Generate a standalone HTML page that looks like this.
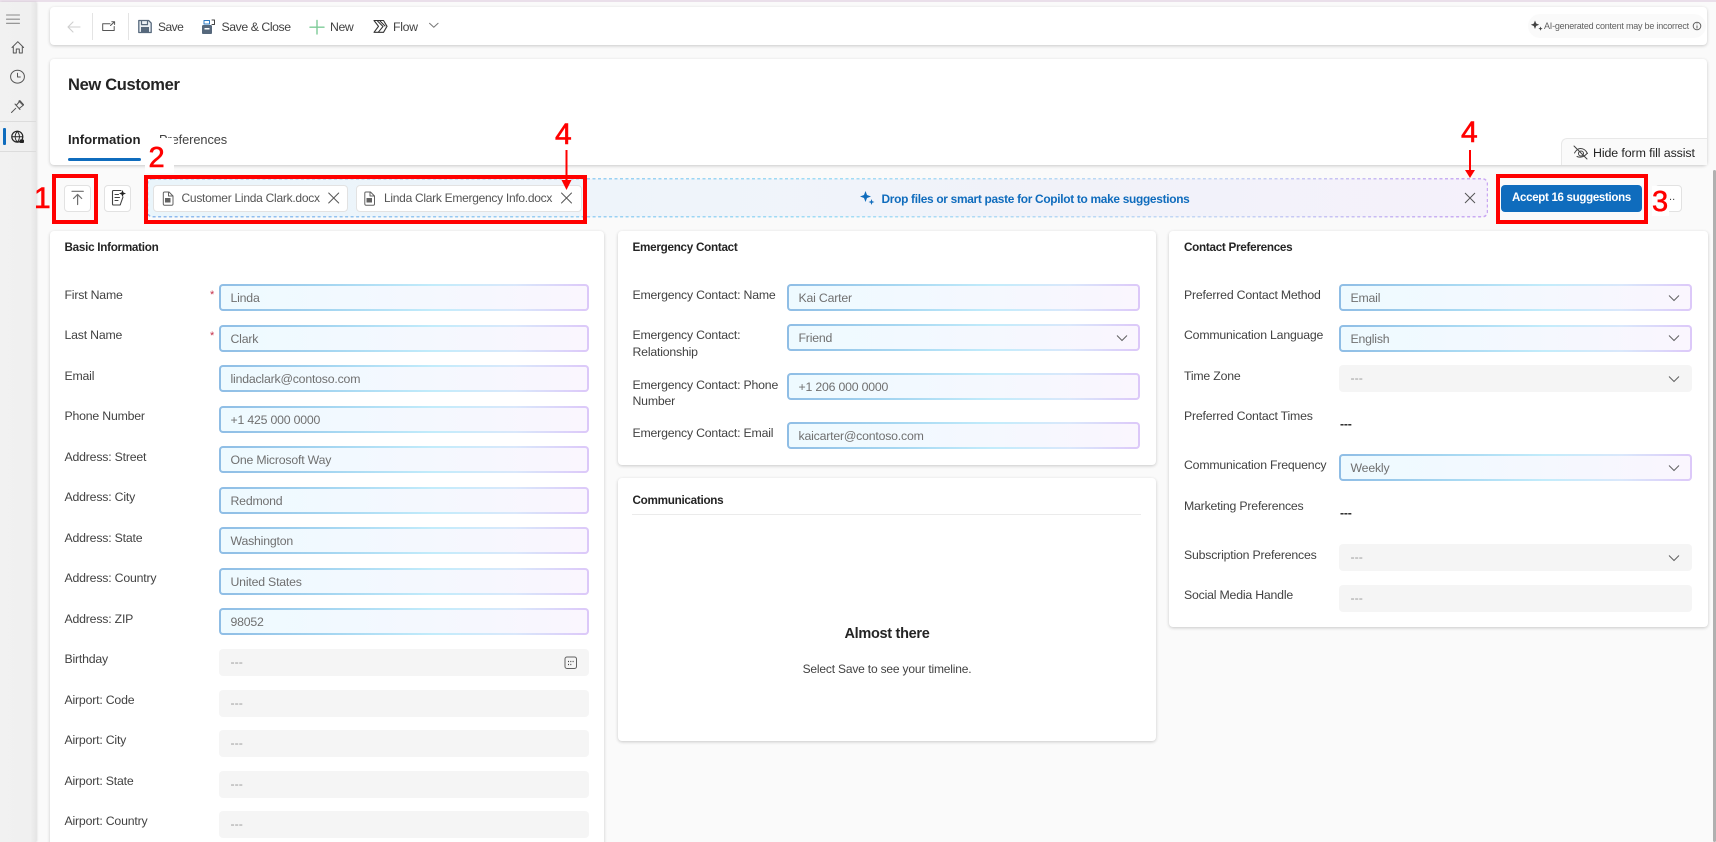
<!DOCTYPE html>
<html><head><meta charset="utf-8"><title>New Customer</title>
<style>
html,body{margin:0;padding:0;width:1716px;height:842px;overflow:hidden;background:#fafafa;font-family:"Liberation Sans",sans-serif;color:#242424}
#w{position:relative;width:1716px;height:842px;overflow:hidden;background:#fafafa}
.a{position:absolute}
.card{position:absolute;background:#fff;border-radius:4px;box-shadow:0 1px 3px rgba(0,0,0,.2)}
.t{position:absolute;white-space:nowrap;font-size:12.3px;line-height:17px;letter-spacing:-.2px;color:#424242}
.h{position:absolute;white-space:nowrap;font-size:11.7px;line-height:17px;font-weight:bold;color:#242424;letter-spacing:-.28px}
.i{position:absolute;height:27px;box-sizing:border-box;border-radius:4px;border:2px solid transparent;font-size:12.3px;line-height:25px;letter-spacing:-.2px;color:#707070;padding-left:9.5px;
background:linear-gradient(90deg,#eefaff 0%,#f2f9ff 35%,#f6f7fe 70%,#faf6fe 100%) padding-box,linear-gradient(90deg,#8fbde5 0%,#a5d6f1 30%,#c2ecfb 58%,#dae8fb 80%,#dcc8f9 100%) border-box}
.d{position:absolute;height:27px;box-sizing:border-box;border-radius:4px;background:#f5f5f5;font-size:12.3px;line-height:27px;color:#9a9a9a;padding-left:11.5px}
.i1{left:219px;width:370px}.i2{left:787px;width:353px}.i3{left:1339px;width:353px}
.sv{position:absolute;overflow:visible;fill:none;stroke:#424242;stroke-width:1}
.b{position:absolute;height:27px;top:185px;box-sizing:border-box;background:#fff;border:1px solid #e2e2e2;border-radius:4px}
.red{position:absolute;color:#f00;font-size:29px;line-height:30px;-webkit-text-stroke:.6px #f00}
.rb{position:absolute;box-sizing:border-box;border:4px solid #f00}
</style></head><body><div id="w">
<div class="a" style="left:0;top:0;width:1716px;height:2px;background:#eadfea"></div>
<!-- sidebar -->
<div class="a" style="left:0;top:2px;width:36px;height:840px;background:linear-gradient(90deg,#f1f1f1 0%,#f0f0f0 85%,#e6e6e6 100%);box-shadow:1px 0 2px rgba(0,0,0,.12)"></div>
<div class="a" style="left:0;top:121px;width:36px;height:1px;background:#dcdcdc"></div>
<div class="a" style="left:0;top:151px;width:36px;height:1px;background:#dcdcdc"></div>
<div class="a" style="left:3px;top:128px;width:2.5px;height:17px;background:#0f6cbd;border-radius:1px"></div>
<svg class="sv" style="left:0;top:0" width="36" height="160" viewBox="0 0 36 160" stroke-linecap="round" stroke-linejoin="round">
<path d="M6.500 15h13M6.500 19.200h13M6.500 23.300h13" stroke="#8a8a8a" stroke-width="1.100"/>
<path d="M12 47.500l5.800-5.800 5.800 5.800M13.300 46.500v6.500h3v-4h3v4h3v-6.500" stroke="#555"/>
<ellipse cx="17.500" cy="76.700" rx="6.900" ry="6.400" stroke="#555"/><path d="M17.500 73.200v3.800h2.800" stroke="#555"/>
<path d="M11.500 112.500l4.200-4.200M15 104l5 5.500M16.500 105l3.500-4 3.500 4-4 3.300" stroke="#555"/><path d="M18.500 101l1.500-.8 3.800 4.300-.8 1z" fill="#555" stroke="#555" stroke-width=".5"/>
<circle cx="17.300" cy="136.700" r="5.500" stroke="#242424" stroke-width="1.200"/><path d="M12 136.700h10.500M17.300 131.300c-2.800 3.500-2.800 7.500 0 10.800M17.300 131.300c2.800 3.500 2.800 7.500 0 10.800" stroke="#242424"/><rect x="19.500" y="139.500" width="4.500" height="3.500" rx="1" fill="#242424" stroke="none"/>
</svg>
<!-- toolbar -->
<div class="card" style="left:50px;top:7px;width:1657px;height:38px"></div>
<div class="a" style="left:92px;top:13px;width:1px;height:27px;background:#e4e4e4"></div>
<div class="a" style="left:128px;top:13px;width:1px;height:27px;background:#e4e4e4"></div>
<svg class="sv" style="left:0;top:0" width="460" height="50" viewBox="0 0 460 50" stroke-linecap="round" stroke-linejoin="round">
<path d="M68 27h12M68 27l5-5M68 27l5 5" stroke="#cfcfcf" stroke-width="1.100"/>
<path d="M110 23.800h-7.300v6.700h11.500v-4" stroke="#555"/><path d="M110.500 25.500l3.800-3.500M111.800 21.800h2.800v2.700" stroke="#555"/>
<path d="M138.800 20.500h9.800l2.600 2.600v9.400h-12.400z" stroke="#56687c" stroke-width="1.300" fill="#eaf0f5"/><path d="M141.500 20.800v3.800h6v-3.800" stroke="#56687c" stroke-width="1.200"/><rect x="141" y="27" width="8" height="5.500" fill="#56687c" stroke="none"/>
<rect x="202.500" y="25.500" width="9" height="8" rx=".8" fill="#56687c" stroke="#56687c"/><rect x="204.500" y="28" width="5" height="1.500" fill="#fff" stroke="none"/>
<path d="M204 20.500h5.500v3.500H204z" stroke="#2f7cc4" stroke-width="1"/><path d="M212 20h2.500v4.500H212" stroke="#424242" stroke-width="1"/>
<path d="M317 20.500v13.500M310 27.200h14" stroke="#7dcb97" stroke-width="1.400"/>
<path d="M374 20.500h9.500l3.500 5.800-3.500 6h-9.500l4.500-6z" stroke="#333" stroke-width="1.100"/><path d="M377.500 21l5.500 5.500-4.500 5.500M380 21l5 5" stroke="#333" stroke-width="1"/>
<path d="M429.500 23.300l4.300 4 4.300-4" stroke="#777"/>
</svg>
<div class="t" style="left:158px;top:18.500px;font-size:12px;letter-spacing:-.5px;color:#424242">Save</div>
<div class="t" style="left:221.500px;top:18.500px;letter-spacing:-.45px">Save &amp; Close</div>
<div class="t" style="left:330px;top:18.500px;letter-spacing:-.4px">New</div>
<div class="t" style="left:393px;top:18.500px;letter-spacing:-.3px">Flow</div>
<div class="a" style="left:1528px;top:14px;width:178px;height:24px;border-radius:12px;background:#fafafa"></div>
<svg class="sv" style="left:1530px;top:16px" width="176" height="20" viewBox="0 0 176 20">
<path d="M4 5l1.200 3 3 1.200-3 1.200L4 13.500l-1.200-3-3-1.200 3-1.200zM9.500 11l.6 1.500 1.500.6-1.500.6-.6 1.500-.6-1.500-1.500-.6 1.500-.6z" fill="#424242" stroke="none" transform="translate(1 -.5)"/>
<circle cx="167" cy="10" r="3.800" stroke="#616161"/><path d="M167 9.500v3M167 7.500v.8" stroke="#616161"/>
</svg>
<div class="t" style="left:1544px;top:17.500px;font-size:9px;letter-spacing:-.22px;color:#616161">AI-generated content may be incorrect</div>
<!-- header -->
<div class="card" style="left:50px;top:59px;width:1657px;height:106px"></div>
<div class="t" style="left:68px;top:75px;font-size:16.500px;line-height:20px;font-weight:bold;letter-spacing:-.33px;color:#242424">New Customer</div>
<div class="t" style="left:68px;top:130.500px;font-size:13.200px;font-weight:bold;letter-spacing:0;color:#242424">Information</div>
<div class="a" style="left:68px;top:158px;width:73px;height:2.500px;background:#0f6cbd;border-radius:2px"></div>
<div class="t" style="left:159px;top:130.500px;font-size:12.800px;letter-spacing:-.08px;color:#424242">Preferences</div>
<div class="a" style="left:145px;top:138px;width:29px;height:35px;background:#fff"></div>
<div class="red" style="left:148.500px;top:143px;font-size:29px">2</div>
<div class="a" style="left:1561px;top:138px;width:146px;height:27px;box-sizing:border-box;background:#fafafa;border:1px solid #e8e8e8;border-bottom:0;border-right:0;border-radius:6px 0 0 0"></div>
<svg class="sv" style="left:1572px;top:144px" width="18" height="18" viewBox="0 0 18 18" stroke-linecap="round">
<path d="M2 2l13 13M2.500 9c2-3.500 4-4.500 6-4.500s5 1 7 5M5 12.500c2 1 6 1.500 10-3" stroke="#424242"/><circle cx="9" cy="9.500" r="2.500" stroke="#424242"/>
</svg>
<div class="t" style="left:1593px;top:144.500px;font-size:12.400px;letter-spacing:-.1px;color:#242424">Hide form fill assist</div>
<!-- action row -->
<div class="b" style="left:63.500px;width:27px"></div>
<div class="b" style="left:104px;width:27px"></div>
<svg class="sv" style="left:60px;top:172px" width="80" height="40" viewBox="0 0 80 40" stroke-linecap="round" stroke-linejoin="round">
<path d="M12 19.300h11.300M17.600 32.500V22.500M13.500 26.500l4.100-4.100 4.100 4.100" stroke="#6f6f6f" stroke-width="1.200"/>
<path d="M61 18.500h-7.500a1 1 0 0 0-1 1v12.500a1 1 0 0 0 1 1h6a1 1 0 0 0 1-1l2.500-7M55 22.500h3.500M55 25.500h4.500M55 28.500h3" stroke="#424242" stroke-width="1.100"/>
<path d="M62.500 18l1 2.500 2.500 1-2.500 1-1 2.500-1-2.500-2.500-1 2.500-1z" fill="#242424" stroke="none"/>
</svg>
<div class="a" style="left:147px;top:178.500px;width:1341px;height:38.500px;box-sizing:border-box;border-radius:5px;background:linear-gradient(90deg,#eaf5fb 0%,#eff4fa 40%,#f1f2f9 70%,#f5f1fb 100%)"></div>
<svg class="a" style="left:147px;top:178px" width="1341" height="40" viewBox="0 0 1341 40" fill="none">
<defs><linearGradient id="g" x1="0" x2="1" y1="0" y2="0"><stop offset="0" stop-color="#8db8ee"/><stop offset=".5" stop-color="#a0dcf5"/><stop offset=".8" stop-color="#c6d6f4"/><stop offset="1" stop-color="#c9a8f2"/></linearGradient></defs>
<rect x=".5" y=".8" width="1340" height="38" rx="5" stroke="url(#g)" stroke-width="1.500" stroke-dasharray="3 2.500"/>
</svg>
<div class="a" style="left:153px;top:185px;width:195px;height:27px;box-sizing:border-box;background:#fff;border:1px solid #e2e2e2;border-radius:4px"></div>
<div class="a" style="left:355.500px;top:185px;width:226px;height:27px;box-sizing:border-box;background:#fff;border:1px solid #e2e2e2;border-radius:4px"></div>
<svg class="sv" style="left:150px;top:185px" width="440" height="27" viewBox="0 0 440 27" stroke-linecap="round" stroke-linejoin="round">
<path d="M14.500 7h4.500l4 4v8a1.200 1.200 0 0 1-1.200 1.200h-7.300a1.200 1.200 0 0 1-1.200-1.200V8.200A1.200 1.200 0 0 1 14.500 7z" stroke="#616161"/><rect x="15" y="13" width="5.500" height="4.500" fill="#616161" stroke="none"/><path d="M18.500 7.500v3.500h4" stroke="#616161"/>
<path d="M216 7h4.500l4 4v8a1.200 1.200 0 0 1-1.200 1.200H216a1.200 1.200 0 0 1-1.200-1.200V8.200A1.200 1.200 0 0 1 216 7z" stroke="#616161"/><rect x="216.500" y="13" width="5.500" height="4.500" fill="#616161" stroke="none"/><path d="M220 7.500v3.500h4" stroke="#616161"/>
<path d="M178.700 8l10 10M188.700 8l-10 10" stroke="#555"/>
<path d="M411.500 8l10 10M421.500 8l-10 10" stroke="#555"/>
</svg>
<div class="t" style="left:181.500px;top:190px;font-size:12px;letter-spacing:-.26px;color:#555">Customer Linda Clark.docx</div>
<div class="t" style="left:384px;top:190px;font-size:12px;letter-spacing:-.28px;color:#555">Linda Clark Emergency Info.docx</div>
<svg class="a" style="left:860px;top:190px" width="16" height="16" viewBox="0 0 16 16"><path d="M5.500 1l1.500 4 4 1.500-4 1.500-1.500 4-1.500-4-4-1.500 4-1.500zM11.500 9l.8 2.200 2.200.8-2.200.8-.8 2.200-.8-2.200-2.200-.8 2.200-.8z" fill="#0f6cbd"/></svg>
<div class="t" style="left:881.500px;top:190.500px;font-weight:bold;font-size:11.900px;letter-spacing:-.3px;color:#0f6cbd">Drop files or smart paste for Copilot to make suggestions</div>
<svg class="sv" style="left:1460px;top:188px" width="20" height="20" viewBox="0 0 20 20"><path d="M5 5l10 10M15 5L5 15" stroke="#555"/></svg>
<div class="a" style="left:1501px;top:185px;width:141px;height:27px;background:#0f6cbd;border-radius:4px;color:#fff;font-size:11.500px;font-weight:bold;line-height:27px;text-align:center;letter-spacing:-.3px">Accept 16 suggestions</div>
<div class="b" style="left:1655px;width:27px"></div>
<div class="a" style="left:1666px;top:190px;color:#424242;font-size:11px;line-height:14px">...</div>
<!-- annotations -->
<div class="rb" style="left:52px;top:174px;width:46px;height:50px"></div>
<div class="rb" style="left:143.500px;top:175px;width:443.500px;height:49px"></div>
<div class="rb" style="left:1496px;top:174px;width:152px;height:50px"></div>
<div class="red" style="left:34px;top:184px;font-size:30px">1</div>
<div class="a" style="left:1652px;top:186px;width:17px;height:30px;background:#fff"></div>
<div class="red" style="left:1652px;top:187px;font-size:29px">3</div>
<div class="red" style="left:555px;top:120px;font-size:30px">4</div>
<div class="red" style="left:1461px;top:118px;font-size:30px">4</div>
<svg class="a" style="left:540px;top:145px" width="60" height="50" viewBox="0 0 60 50"><path d="M26.500 5v33" stroke="#f00" stroke-width="2"/><path d="M21.500 35h10l-5 10z" fill="#f00"/></svg>
<svg class="a" style="left:1445px;top:145px" width="50" height="35" viewBox="0 0 50 35"><path d="M25 5v22" stroke="#f00" stroke-width="2"/><path d="M20 25h10l-5 8z" fill="#f00"/></svg>
<!-- Basic info -->
<div class="card" style="left:50px;top:231px;width:554px;height:640px"></div>
<div class="h" style="left:64.500px;top:238.500px">Basic Information</div>
<div class="t" style="left:64.500px;top:286.700px">First Name</div>
<div class="t" style="left:64.500px;top:327.200px">Last Name</div>
<div class="t" style="left:64.500px;top:367.700px">Email</div>
<div class="t" style="left:64.500px;top:408.200px">Phone Number</div>
<div class="t" style="left:64.500px;top:448.700px">Address: Street</div>
<div class="t" style="left:64.500px;top:489.200px">Address: City</div>
<div class="t" style="left:64.500px;top:529.700px">Address: State</div>
<div class="t" style="left:64.500px;top:570.200px">Address: Country</div>
<div class="t" style="left:64.500px;top:610.700px">Address: ZIP</div>
<div class="t" style="left:64.500px;top:651.200px">Birthday</div>
<div class="t" style="left:64.500px;top:691.700px">Airport: Code</div>
<div class="t" style="left:64.500px;top:732.200px">Airport: City</div>
<div class="t" style="left:64.500px;top:772.700px">Airport: State</div>
<div class="t" style="left:64.500px;top:813.200px">Airport: Country</div>
<div class="t" style="left:210px;top:287px;color:#c4314b;font-size:11px">*</div>
<div class="t" style="left:210px;top:327.500px;color:#c4314b;font-size:11px">*</div>
<div class="i i1" style="top:284px">Linda</div>
<div class="i i1" style="top:324.500px">Clark</div>
<div class="i i1" style="top:365px">lindaclark@contoso.com</div>
<div class="i i1" style="top:405.500px">+1 425 000 0000</div>
<div class="i i1" style="top:446px">One Microsoft Way</div>
<div class="i i1" style="top:486.500px">Redmond</div>
<div class="i i1" style="top:527px">Washington</div>
<div class="i i1" style="top:567.500px">United States</div>
<div class="i i1" style="top:608px">98052</div>
<div class="d i1" style="top:649px">---</div>
<div class="d i1" style="top:689.500px">---</div>
<div class="d i1" style="top:730px">---</div>
<div class="d i1" style="top:770.500px">---</div>
<div class="d i1" style="top:811px">---</div>
<svg class="sv" style="left:564px;top:656px" width="14" height="14" viewBox="0 0 14 14"><rect x="1" y="1" width="11.500" height="11.500" rx="2" stroke="#616161"/><path d="M4 5.500h1M6.300 5.500h1M8.600 5.500h1M4 8.500h1M6.300 8.500h1" stroke="#424242" stroke-width="1.200"/></svg>
<!-- Emergency -->
<div class="card" style="left:618px;top:231px;width:538px;height:234px"></div>
<div class="h" style="left:632.500px;top:238.500px">Emergency Contact</div>
<div class="t" style="left:632.500px;top:286.700px">Emergency Contact: Name</div>
<div class="t" style="left:632.500px;top:327.300px">Emergency Contact:</div>
<div class="t" style="left:632.500px;top:344px">Relationship</div>
<div class="t" style="left:632.500px;top:376.700px">Emergency Contact: Phone</div>
<div class="t" style="left:632.500px;top:393.400px">Number</div>
<div class="t" style="left:632.500px;top:425.300px">Emergency Contact: Email</div>
<div class="i i2" style="top:284px">Kai Carter</div>
<div class="i i2" style="top:324px">Friend</div>
<div class="i i2" style="top:373px">+1 206 000 0000</div>
<div class="i i2" style="top:422px">kaicarter@contoso.com</div>
<svg class="sv" style="left:1112px;top:333px" width="20" height="12" viewBox="0 0 20 12"><path d="M5 2.500l5 5 5-5" stroke="#616161"/></svg>
<!-- Communications -->
<div class="card" style="left:618px;top:478px;width:538px;height:263px"></div>
<div class="h" style="left:632.500px;top:492px">Communications</div>
<div class="a" style="left:632px;top:514px;width:509px;height:1px;background:#ebebeb"></div>
<div class="t" style="left:618px;width:538px;text-align:center;top:625.500px;font-size:14.500px;font-weight:bold;letter-spacing:-.3px;color:#242424">Almost there</div>
<div class="t" style="left:618px;width:538px;text-align:center;top:660.500px;font-size:12px;letter-spacing:-.18px;color:#424242">Select Save to see your timeline.</div>
<!-- Contact prefs -->
<div class="card" style="left:1169px;top:231px;width:539px;height:396px"></div>
<div class="h" style="left:1184px;top:238.500px">Contact Preferences</div>
<div class="t" style="left:1184px;top:286.700px">Preferred Contact Method</div>
<div class="t" style="left:1184px;top:327.300px">Communication Language</div>
<div class="t" style="left:1184px;top:367.700px">Time Zone</div>
<div class="t" style="left:1184px;top:408.300px">Preferred Contact Times</div>
<div class="t" style="left:1184px;top:457px">Communication Frequency</div>
<div class="t" style="left:1184px;top:497.700px">Marketing Preferences</div>
<div class="t" style="left:1184px;top:546.500px">Subscription Preferences</div>
<div class="t" style="left:1184px;top:586.500px">Social Media Handle</div>
<div class="i i3" style="top:284px">Email</div>
<div class="i i3" style="top:324.500px">English</div>
<div class="d i3" style="top:365px">---</div>
<div class="t" style="left:1340px;top:416px;color:#242424;font-weight:bold">---</div>
<div class="i i3" style="top:454px">Weekly</div>
<div class="t" style="left:1340px;top:505px;color:#242424;font-weight:bold">---</div>
<div class="d i3" style="top:544px">---</div>
<div class="d i3" style="top:584.500px">---</div>
<svg class="sv" style="left:1664px;top:293px" width="20" height="12" viewBox="0 0 20 12"><path d="M5 2.500l5 5 5-5" stroke="#616161"/></svg>
<svg class="sv" style="left:1664px;top:333px" width="20" height="12" viewBox="0 0 20 12"><path d="M5 2.500l5 5 5-5" stroke="#616161"/></svg>
<svg class="sv" style="left:1664px;top:373.500px" width="20" height="12" viewBox="0 0 20 12"><path d="M5 2.500l5 5 5-5" stroke="#616161"/></svg>
<svg class="sv" style="left:1664px;top:463px" width="20" height="12" viewBox="0 0 20 12"><path d="M5 2.500l5 5 5-5" stroke="#616161"/></svg>
<svg class="sv" style="left:1664px;top:553px" width="20" height="12" viewBox="0 0 20 12"><path d="M5 2.500l5 5 5-5" stroke="#616161"/></svg>
<!-- scrollbar -->
<div class="a" style="left:1713px;top:170px;width:3px;height:672px;background:#b0b0b0;border-radius:2px"></div>
</div></body></html>
